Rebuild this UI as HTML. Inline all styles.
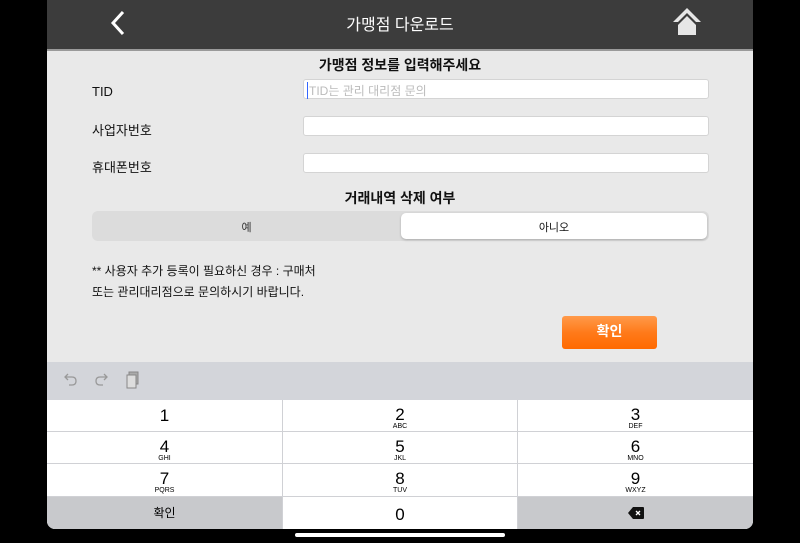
<!DOCTYPE html>
<html><head><meta charset="utf-8"><style>
*{margin:0;padding:0;box-sizing:border-box}
body{width:800px;height:543px;background:#000;position:relative;overflow:hidden;font-family:"Liberation Sans","Noto Sans CJK KR",sans-serif}
#app{position:absolute;left:47px;top:0;width:706px;height:529px;background:#e9e9e9;border-radius:0 0 8px 8px;overflow:hidden}
.hdr{position:absolute;left:0;top:0;width:706px;height:51px;background:#3c3c3c;border-bottom:2px solid #9a9a9a}
.title{position:absolute;left:0;width:706px;top:11px;text-align:center;color:#fff;font-size:16px}
.abs{position:absolute}
.lbl{font-size:13px;color:#111}
.inp{position:absolute;left:256px;width:406px;height:20px;background:#fff;border:1px solid #d4d4d4;border-radius:3px}
.kb{position:absolute;left:0;top:400px;width:706px;height:129px;background:#d0d1d5}
.key{position:absolute;background:#fff;text-align:center;color:#000}
.key .n{font-size:17px;line-height:17px;display:block;margin-top:6px}
.key .s{font-size:7px;display:block;line-height:8px}
</style></head><body>
<div id="app">
<div class="hdr">
<svg class="abs" style="left:62px;top:10px" width="18" height="26"><path d="M14 2 L4 13 L14 24" stroke="#fff" stroke-width="3" fill="none"/></svg>
<div class="title">가맹점 다운로드</div>
<svg class="abs" style="left:625px;top:6px" width="30" height="30"><path d="M15 2 L29 16 L24 16 L15 7 L6 16 L1 16 Z" fill="#e6e6e6"/><path d="M15 10 L24 19 L24 29 L6 29 L6 19 Z" fill="#e6e6e6"/></svg>
</div>
<div class="abs" style="left:0;width:706px;top:55px;text-align:center;font-size:14px;font-weight:bold;color:#111">가맹점 정보를 입력해주세요</div>
<div class="abs lbl" style="left:45px;top:84px">TID</div>
<div class="inp" style="top:79px"><span style="position:absolute;left:3px;top:2px;font-size:12px;color:#bbb;border-left:1px solid #36f;padding-left:1px">TID는 관리 대리점 문의</span></div>
<div class="abs lbl" style="left:45px;top:120px">사업자번호</div>
<div class="inp" style="top:116px"></div>
<div class="abs lbl" style="left:45px;top:157px">휴대폰번호</div>
<div class="inp" style="top:153px"></div>
<div class="abs" style="left:0;width:706px;top:188px;text-align:center;font-size:14px;font-weight:bold;color:#111">거래내역 삭제 여부</div>
<div class="abs" style="left:45px;top:211px;width:617px;height:30px;background:#dcdcdc;border-radius:6px"></div>
<div class="abs" style="left:354px;top:213px;width:306px;height:26px;background:#fff;border-radius:5px;box-shadow:0 1px 2px #aaa"></div>
<div class="abs" style="left:45px;width:309px;top:219px;text-align:center;font-size:11px;color:#333">예</div>
<div class="abs" style="left:354px;width:306px;top:219px;text-align:center;font-size:11px;color:#111">아니오</div>
<div class="abs" style="left:45px;top:261px;font-size:12px;line-height:21px;color:#111">** 사용자 추가 등록이 필요하신 경우 : 구매처<br>또는 관리대리점으로 문의하시기 바랍니다.</div>
<div class="abs" style="left:515px;top:316px;width:95px;height:33px;border-radius:3px;background:linear-gradient(#ff9a4a,#ff7a1a 50%,#ff6a00);color:#fff;font-size:14px;font-weight:bold;text-align:center;line-height:31px">확인</div>
<div class="abs" style="left:0;top:362px;width:706px;height:38px;background:#d3d5da"></div>
<svg class="abs" style="left:16px;top:372px" width="16" height="16"><path d="M5 2 L2 5 L5 8 M2 5 H9 Q13 5 13 9 Q13 13 9 13 H6" stroke="#999" stroke-width="1.3" fill="none"/></svg>
<svg class="abs" style="left:46px;top:372px" width="16" height="16"><path d="M11 2 L14 5 L11 8 M14 5 H7 Q3 5 3 9 Q3 13 7 13 H10" stroke="#999" stroke-width="1.3" fill="none"/></svg>
<svg class="abs" style="left:78px;top:371px" width="16" height="18"><rect x="4" y="1" width="9" height="12" fill="#aaa" stroke="#888"/><rect x="2" y="4" width="9" height="13" fill="#ddd" stroke="#888"/></svg>
<div class="kb">
<div class="key" style="left:0;top:0;width:235px;height:31px"><span class="n" style="margin-top:7px">1</span></div>
<div class="key" style="left:236px;top:0;width:234px;height:31px"><span class="n">2</span><span class="s">ABC</span></div>
<div class="key" style="left:471px;top:0;width:235px;height:31px"><span class="n">3</span><span class="s">DEF</span></div>
<div class="key" style="left:0;top:32px;width:235px;height:31px"><span class="n">4</span><span class="s">GHI</span></div>
<div class="key" style="left:236px;top:32px;width:234px;height:31px"><span class="n">5</span><span class="s">JKL</span></div>
<div class="key" style="left:471px;top:32px;width:235px;height:31px"><span class="n">6</span><span class="s">MNO</span></div>
<div class="key" style="left:0;top:64px;width:235px;height:32px"><span class="n">7</span><span class="s">PQRS</span></div>
<div class="key" style="left:236px;top:64px;width:234px;height:32px"><span class="n">8</span><span class="s">TUV</span></div>
<div class="key" style="left:471px;top:64px;width:235px;height:32px"><span class="n">9</span><span class="s">WXYZ</span></div>
<div class="key" style="left:0;top:97px;width:235px;height:32px;background:#c8c9cc;font-size:12px;line-height:32px">확인</div>
<div class="key" style="left:236px;top:97px;width:234px;height:32px"><span class="n" style="margin-top:9px">0</span></div>
<div class="key" style="left:471px;top:97px;width:235px;height:32px;background:#c8c9cc">
<svg style="margin-top:10px" width="16" height="12"><path d="M5 0 H15 Q16 0 16 1 V11 Q16 12 15 12 H5 L0 6 Z" fill="#111"/><path d="M8 4 L12 8 M12 4 L8 8" stroke="#fff" stroke-width="1.3"/></svg></div>
</div>
</div>
<div class="abs" style="left:295px;top:533px;width:210px;height:4px;background:#fff;border-radius:2px"></div>
</body></html>
